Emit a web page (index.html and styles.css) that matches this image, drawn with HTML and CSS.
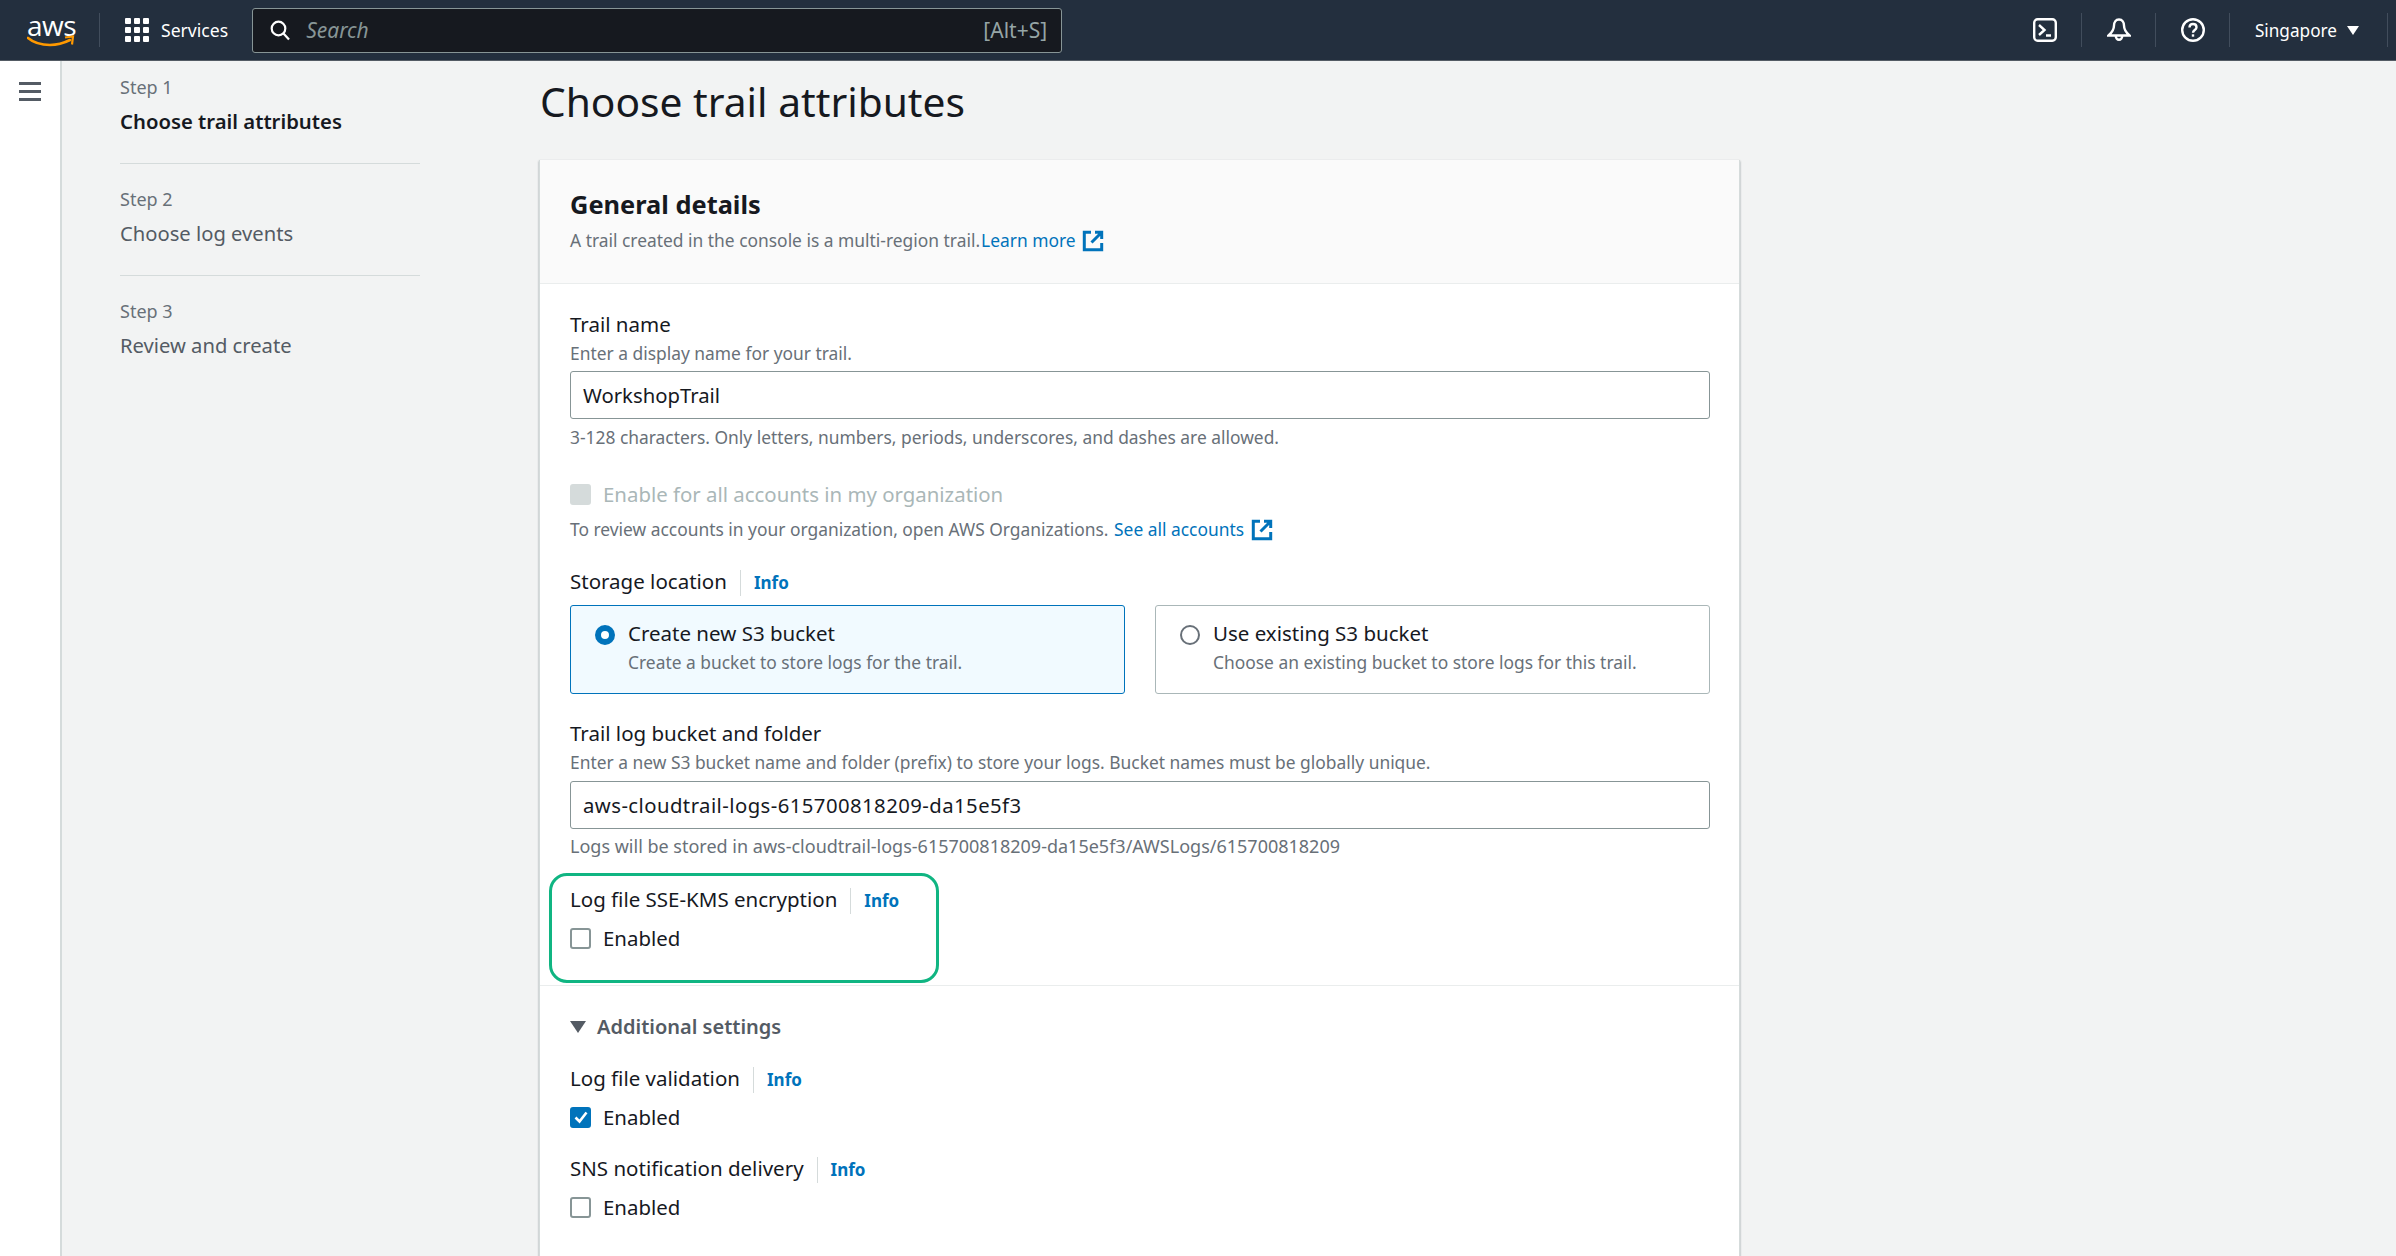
FILE: index.html
```html
<!DOCTYPE html>
<html lang="en">
<head>
    <meta charset="UTF-8">
    <meta name="viewport" content="width=device-width, initial-scale=1.0">
    <title>Choose trail attributes</title>
    <link rel="stylesheet" href="styles.css">
</head>
<body>

    <header class="topnav">
        <div class="logo">
            <span class="logo-text">aws</span>
            <svg class="logo-smile" width="48" height="14" viewBox="0 0 48 14"><path d="M1 3c6 5 14 7 22 7 7 0 14-2 20-5" fill="none" stroke="#f90" stroke-width="2.6" stroke-linecap="round"/><path d="M38 2.500l8-1-1 8" fill="none" stroke="#f90" stroke-width="2.200"/></svg>
        </div>
        <span class="nav-sep nav-sep-logo"></span>
        <svg class="grid-icon" width="24" height="24" viewBox="0 0 24 24" fill="#fff">
            <rect width="6" height="6" rx="1"/><rect x="9" width="6" height="6" rx="1"/><rect x="18" width="6" height="6" rx="1"/>
            <rect y="9" width="6" height="6" rx="1"/><rect x="9" y="9" width="6" height="6" rx="1"/><rect x="18" y="9" width="6" height="6" rx="1"/>
            <rect y="18" width="6" height="6" rx="1"/><rect x="9" y="18" width="6" height="6" rx="1"/><rect x="18" y="18" width="6" height="6" rx="1"/>
        </svg>
        <span class="services">Services</span>
        <div class="search">
            <svg width="20" height="21" viewBox="0 0 20 21" fill="none" stroke="#fff" stroke-width="2.200"><circle cx="8.500" cy="8.500" r="6.800"/><path d="M13.500 13.500l5.500 6"/></svg>
            <span class="search-text">Search</span>
            <span class="search-key">[Alt+S]</span>
        </div>
        <div class="nav-right">
            <svg class="nav-icon" width="24" height="24" viewBox="0 0 24 24" fill="none" stroke="#fff" stroke-width="2.400"><rect x="1.200" y="1.200" width="21.600" height="21.600" rx="3.500"/><path d="M6 7l5.500 5L6 17M13 17.500h5"/></svg>
            <span class="nav-sep"></span>
            <svg class="nav-icon" width="24" height="24" viewBox="0 0 24 24" fill="none" stroke="#fff" stroke-width="2.400"><path d="M12 1.500c-3.500 0-5 3-5 6 0 4-2 7-5.500 10h21C19 14.500 17 11.500 17 7.500c0-3-1.500-6-5-6z"/><path d="M8.800 18a3.200 3.800 0 0 0 6.400 0"/></svg>
            <span class="nav-sep"></span>
            <svg class="nav-icon" width="24" height="24" viewBox="0 0 24 24" fill="none" stroke="#fff" stroke-width="2.400"><circle cx="12" cy="12" r="10.800"/><path d="M8.500 9.500c0-2.200 1.500-3.500 3.500-3.500s3.500 1.300 3.500 3.200c0 2.800-3.500 2.800-3.500 5.600"/><path d="M12 16.300v2.400"/></svg>
            <span class="nav-sep"></span>
            <span class="region">Singapore</span>
            <span class="region-caret"></span>
            <span class="nav-sep nav-sep-end"></span>
        </div>
    </header>

    <div class="page">
        <aside class="sidebar">
            <div class="burger"><span></span><span></span><span></span></div>
        </aside>

        <nav class="steps">
            <div class="step">
                <div class="step-num">Step 1</div>
                <div class="step-name step-active">Choose trail attributes</div>
            </div>
            <div class="step">
                <div class="step-num">Step 2</div>
                <div class="step-name">Choose log events</div>
            </div>
            <div class="step">
                <div class="step-num">Step 3</div>
                <div class="step-name">Review and create</div>
            </div>
        </nav>

        <main class="content">
            <h1>Choose trail attributes</h1>

            <section class="card">
                <div class="card-head">
                    <h2>General details</h2>
                    <p class="hint">A trail created in the console is a multi-region trail.<a class="link">Learn more</a>
                        <svg class="ext" width="22" height="22" viewBox="0 0 22 22" fill="none" stroke="#0073bb" stroke-width="3"><path d="M9 2.300H2.300v17.400h17.400V13"/><path d="M13 2.300h6.700V9M19.500 2.500L9.500 12.500"/></svg>
                    </p>
                </div>

                <div class="card-body">
                    <div class="label">Trail name</div>
                    <div class="hint">Enter a display name for your trail.</div>
                    <div class="input input-name">WorkshopTrail</div>
                    <div class="hint constraint">3-128 characters. Only letters, numbers, periods, underscores, and dashes are allowed.</div>

                    <div class="check-row org-row disabled"><span class="box box-disabled"></span>Enable for all accounts in my organization</div>
                    <div class="hint org-hint">To review accounts in your organization, open AWS Organizations. <a class="link">See all accounts</a>
                        <svg class="ext" width="22" height="22" viewBox="0 0 22 22" fill="none" stroke="#0073bb" stroke-width="3"><path d="M9 2.300H2.300v17.400h17.400V13"/><path d="M13 2.300h6.700V9M19.500 2.500L9.500 12.500"/></svg>
                    </div>

                    <div class="label storage-label">Storage location<span class="info">Info</span></div>
                    <div class="tiles">
                        <div class="tile tile-on">
                            <span class="radio radio-on"></span>
                            <div>
                                <div class="label">Create new S3 bucket</div>
                                <div class="hint">Create a bucket to store logs for the trail.</div>
                            </div>
                        </div>
                        <div class="tile">
                            <span class="radio"></span>
                            <div>
                                <div class="label">Use existing S3 bucket</div>
                                <div class="hint">Choose an existing bucket to store logs for this trail.</div>
                            </div>
                        </div>
                    </div>

                    <div class="label bucket-label">Trail log bucket and folder</div>
                    <div class="hint">Enter a new S3 bucket name and folder (prefix) to store your logs. Bucket names must be globally unique.</div>
                    <div class="input input-bucket">aws-cloudtrail-logs-615700818209-da15e5f3</div>
                    <div class="hint bucket-note">Logs will be stored in aws-cloudtrail-logs-615700818209-da15e5f3/AWSLogs/615700818209</div>

                    <div class="kms">
                        <div class="highlight"></div>
                        <div class="label">Log file SSE-KMS encryption<span class="info">Info</span></div>
                        <div class="check-row"><span class="box"></span>Enabled</div>
                    </div>
                </div>

                <div class="card-more">
                    <div class="more-title"><span class="more-caret"></span>Additional settings</div>
                    <div class="label more-label">Log file validation<span class="info">Info</span></div>
                    <div class="check-row">
                        <span class="box box-on">
                            <svg width="16" height="16" viewBox="0 0 16 16" fill="none" stroke="#fff" stroke-width="2.600"><path d="M2.500 8.500l4 4 7-9"/></svg>
                        </span>Enabled
                    </div>
                    <div class="label more-label">SNS notification delivery<span class="info">Info</span></div>
                    <div class="check-row"><span class="box"></span>Enabled</div>
                </div>
            </section>
        </main>
    </div>

</body>
</html>
```

FILE: styles.css
```css
* {
    box-sizing: border-box;
}
html, body {
    height: 100%;
}
body {
    margin: 0;
    overflow: hidden;
    background-color: #f2f3f3;
    color: #16191f;
    font-family: "Noto Sans", sans-serif;
    font-size: 20px;
}

/* top bar */
.topnav {
    display: flex;
    align-items: center;
    height: 61px;
    background-color: #232f3e;
    border-bottom: 1px solid #545b64;
}
.logo {
    position: relative;
    flex: none;
    width: 46px;
    height: 40px;
    margin-left: 27px;
}
.logo-text {
    display: block;
    color: #fff;
    font-family: "Open Sans", sans-serif;
    font-size: 28px;
    line-height: 30px;
    letter-spacing: -0.5px;
}
.logo-smile {
    position: absolute;
    left: 0;
    top: 25px;
}
.nav-sep {
    flex: none;
    width: 1px;
    height: 34px;
    background-color: #414d5c;
}
.nav-sep-logo {
    margin-left: 26px;
}
.grid-icon {
    flex: none;
    margin-left: 25px;
}
.services {
    margin-left: 12px;
    color: #fff;
    font-size: 17.6px;
}
.search {
    display: flex;
    align-items: center;
    width: 810px;
    height: 45px;
    margin-left: 24px;
    padding: 0 14px 0 17px;
    background-color: #16191f;
    border: 1px solid #879596;
    border-radius: 3px;
}
.search-text {
    margin-left: 16px;
    color: #879596;
    font-size: 21px;
    font-style: italic;
}
.search-key {
    margin-left: auto;
    color: #95a5a6;
    font-size: 21px;
}
.nav-right {
    display: flex;
    align-items: center;
    margin-left: auto;
}
.nav-right .nav-sep {
    margin-left: 24px;
    margin-right: 25px;
}
.region {
    color: #fff;
    font-size: 17.2px;
}
.region-caret {
    width: 0;
    height: 0;
    margin-left: 10px;
    border-left: 6px solid transparent;
    border-right: 6px solid transparent;
    border-top: 9px solid #fff;
}
.nav-right .nav-sep-end {
    margin-left: 28px;
    margin-right: 8px;
}

/* page columns */
.page {
    display: flex;
    height: 1195px;
}
.sidebar {
    flex: none;
    width: 62px;
    padding: 21px 0 0 19px;
    background-color: #fff;
    border-right: 2px solid #d5dbdb;
}
.burger span {
    display: block;
    width: 22px;
    height: 3px;
    margin-bottom: 5px;
    background-color: #545b64;
}
.steps {
    flex: none;
    width: 300px;
    margin-left: 58px;
    padding-top: 11px;
}
.step {
    height: 112px;
    border-bottom: 1px solid #d5dbdb;
}
.step:last-child {
    border-bottom: none;
}
.step + .step {
    padding-top: 20px;
}
.step:first-child {
    height: 92px;
}
.step-num {
    color: #687078;
    font-size: 18px;
    line-height: 30px;
}
.step-name {
    margin-top: 4px;
    color: #545b64;
    font-size: 20.2px;
    line-height: 30px;
}
.step-active {
    color: #16191f;
    font-size: 20.3px;
    font-weight: 600;
}
.content {
    flex: none;
    width: 1201px;
    margin-left: 119px;
}
h1 {
    margin: 0;
    height: 99px;
    padding: 12px 0 0 1px;
    font-size: 40.7px;
    font-weight: 400;
    line-height: 56px;
}

/* card */
.card {
    background-color: #fff;
    box-shadow: 0 1px 2px rgba(0, 28, 36, 0.4);
    border-left: 1px solid #d5dbdb;
    border-right: 1px solid #d5dbdb;
    min-height: 1100px;
}
.card-head {
    height: 124px;
    padding: 25px 30px 0;
    background-color: #fafafa;
    border-bottom: 1px solid #eaeded;
}
h2 {
    margin: 0;
    font-size: 25.4px;
    font-weight: 700;
    line-height: 38px;
}
.hint {
    margin: 0;
    color: #687078;
    font-size: 17.4px;
    line-height: 28px;
}
.link {
    margin-left: 1px;
    color: #0073bb;
}
.ext {
    margin-left: 2px;
    vertical-align: -5px;
}
.card-head .hint {
    margin-top: 3px;
}
.card-body {
    padding: 25px 29px 32px 30px;
    border-bottom: 1px solid #eaeded;
}
.label {
    display: flex;
    align-items: center;
    font-size: 20.5px;
    line-height: 30px;
}
.info {
    margin: 3px 0 0 13px;
    padding-left: 13px;
    border-left: 1px solid #d5dbdb;
    color: #0073bb;
    font-size: 17px;
    font-weight: 700;
    line-height: 26px;
}
.input {
    display: flex;
    align-items: center;
    height: 48px;
    padding-left: 12px;
    background-color: #fff;
    border: 1px solid #879596;
    border-radius: 3px;
    font-size: 20.3px;
}
.input-name {
    margin-top: 4px;
}
.constraint {
    margin-top: 4px;
}
.check-row {
    display: flex;
    align-items: center;
    font-size: 20.4px;
    line-height: 30px;
    color: #16191f;
}
.org-row {
    margin-top: 28px;
}
.disabled {
    color: #aab7b8;
}
.org-hint {
    margin-top: 6px;
}
.box {
    display: flex;
    flex: none;
    align-items: center;
    justify-content: center;
    width: 21px;
    height: 21px;
    margin-right: 12px;
    background-color: #fff;
    border: 2px solid #879596;
    border-radius: 3px;
}
.box-disabled {
    background-color: #d5dbdb;
    border-color: #d5dbdb;
}
.box-on {
    background-color: #0073bb;
    border-color: #0073bb;
}
.storage-label {
    margin-top: 23px;
}
.tiles {
    display: grid;
    grid-template-columns: 1fr 1fr;
    gap: 30px;
    margin-top: 9px;
}
.tile {
    display: flex;
    height: 89px;
    padding: 12px 0 0 24px;
    border: 1px solid #aab7b8;
    border-radius: 3px;
}
.tile-on {
    background-color: #f1faff;
    border-color: #0073bb;
}
.radio {
    flex: none;
    width: 20px;
    height: 20px;
    margin: 7px 13px 0 0;
    background-color: #fff;
    border: 2px solid #687078;
    border-radius: 50%;
}
.radio-on {
    border: 6px solid #0073bb;
}
.bucket-label {
    margin-top: 24px;
}
.input-bucket {
    margin-top: 5px;
    letter-spacing: 0.45px;
}
.bucket-note {
    margin-top: 3px;
    font-size: 18px;
}
.kms {
    position: relative;
    margin-top: 24px;
}
.kms .check-row {
    margin-top: 9px;
}

/* green annotation drawn on top of the screenshot */
.highlight {
    position: absolute;
    left: -21px;
    top: -11px;
    width: 390px;
    height: 110px;
    border: 3px solid #10b582;
    border-radius: 18px;
}
.card-more {
    padding: 26px 29px 0 30px;
}
.more-title {
    display: flex;
    align-items: center;
    color: #545b64;
    font-size: 20px;
    font-weight: 600;
    line-height: 30px;
}
.more-caret {
    width: 0;
    height: 0;
    margin-right: 11px;
    border-left: 8px solid transparent;
    border-right: 8px solid transparent;
    border-top: 12px solid #545b64;
}
.more-label {
    margin-top: 21px;
}
.more-label + .check-row {
    margin-top: 9px;
}
```
